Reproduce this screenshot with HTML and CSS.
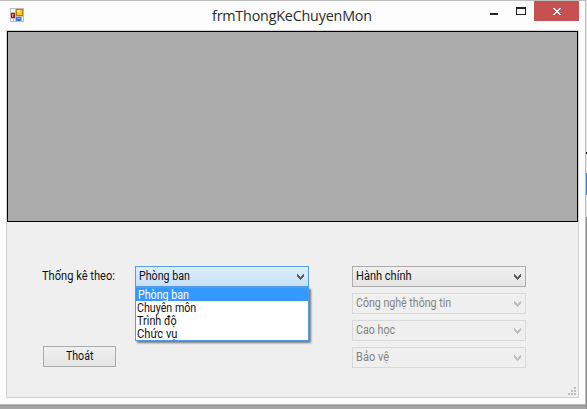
FILE: index.html
```html
<!DOCTYPE html>
<html lang="vi">
<head>
<meta charset="utf-8">
<title>frmThongKeChuyenMon</title>
<link rel="stylesheet" href="styles.css">
</head>
<body>
<svg width="0" height="0" class="defs" aria-hidden="true">
  <symbol id="chevron" viewBox="0 0 7 6"><path d="M0 0h1v1h1v1h1v1h1v-1h1v-1h1v-1h1v3h-1v1h-1v1h-1v1h-1v-1h-1v-1h-1v-1h-1z" fill="currentColor"/></symbol>
</svg>
<div class="desktop">
  <main class="window">
    <header class="titlebar">
      <svg class="app-icon" width="14" height="14" viewBox="0 0 14 14" shape-rendering="crispEdges">
        <path fill="#bdbdbd" d="M0 0h14v14H0z"/>
        <path fill="#fff" d="M1 1h4v3H1zM1 11h2v2H1zM4 11h1v2H4zM12 9h1v4h-1z"/>
        <path fill="#a71b16" d="M1 5h4v5H1z"/><path fill="#e8877d" d="M2 6h2v3H2z"/><path fill="#c52d25" d="M3 7h1v2H3z"/>
        <path fill="#b77b08" d="M6 1h7v7H6z"/><path fill="#ffc928" d="M7 2h5v5H7z"/><path fill="#ffe999" d="M7 2h3v2H7z"/>
        <path fill="#3b78d8" d="M6 9h5v4H6z"/><path fill="#79aef4" d="M7 10h3v1H7z"/>
      </svg>
      <h1 class="title">frmThongKeChuyenMon</h1>
      <div class="controls">
        <svg width="44" height="20" viewBox="0 0 44 20" shape-rendering="crispEdges"><path fill="#222" d="M0 12h8v2H0zM26 6h10v8H26zM27 8v5h8V8z" fill-rule="evenodd"/></svg>
        <svg class="close" width="45" height="20" viewBox="0 0 45 20" shape-rendering="crispEdges"><path fill="#fff" d="M19 7h2v1h1v1h2v-1h1v-1h2v1h-1v1h-1v1h-1v1h1v1h1v1h1v1h-2v-1h-1v-1h-2v1h-1v1h-2v-1h1v-1h1v-1h1v-1h-1v-1h-1v-1h-1z"/></svg>
      </div>
    </header>
    <section class="client">
      <div class="grid"></div>
      <div class="form">
        <div class="left">
          <label class="label"><span class="t-label">Thống kê theo:</span></label>
          <button class="button"><span class="t-exit">Thoát</span></button>
        </div>
        <div class="picker">
          <div class="combo active"><span class="t-dept">Phòng ban</span><svg width="7" height="6"><use href="#chevron"/></svg></div>
          <ul class="menu">
            <li class="selected"><span class="t-dept">Phòng ban</span></li>
            <li><span class="t-major">Chuyên môn</span></li>
            <li><span class="t-level">Trình độ</span></li>
            <li><span class="t-role">Chức vụ</span></li>
          </ul>
        </div>
        <div class="options">
          <div class="combo"><span class="t-admin">Hành chính</span><svg width="7" height="6"><use href="#chevron"/></svg></div>
          <div class="combo disabled"><span class="t-it">Công nghệ thông tin</span><svg width="7" height="6"><use href="#chevron"/></svg></div>
          <div class="combo disabled"><span class="t-grad">Cao học</span><svg width="7" height="6"><use href="#chevron"/></svg></div>
          <div class="combo disabled"><span class="t-guard">Bảo vệ</span><svg width="7" height="6"><use href="#chevron"/></svg></div>
        </div>
      </div>
      <svg class="grip" width="8" height="8" shape-rendering="crispEdges"><path fill="#bdbdbd" d="M6 0h2v2H6zM3 3h2v2H3zM6 3h2v2H6zM0 6h2v2H0zM3 6h2v2H3zM6 6h2v2H6z"/></svg>
    </section>
  </main>
  <aside class="behind"></aside>
</div>
</body>
</html>
```
FILE: styles.css
```css
* { box-sizing: border-box; }
body { margin: 0; background: #a5a5a5; font: 12px/13px Roboto, "Liberation Sans", sans-serif; color: #111; overflow: hidden; }
.defs { position: absolute; }
.desktop { display: flex; width: 587px; height: 409px; }
.window { width: 586px; height: 405px; background: #fcfcfc; border: solid #bdbdbd; border-width: 1px 1px 1px 0; box-shadow: 0 1px 1px #969696; }
.titlebar { height: 29px; display: grid; grid-template-columns: 212px 278px 88px; }
.app-icon { margin: 7px 0 0 10px; }
.title { margin: 4px 0 0; font: 400 15px/20px "Open Sans", sans-serif; color: #2b2b2b; white-space: nowrap; letter-spacing: -.2px; transform: scaleX(.955); transform-origin: left; }
.controls { display: flex; }
.controls svg { flex: none; }
.close { background: #c75050; }
.client { position: relative; margin-left: 6px; width: 573px; height: 368px; border: 1px solid #d2d2d2; background: #efefef; }
.grid { width: 571px; height: 191px; border: 1px solid #000; background: #ababab; }
.form { display: grid; grid-template-columns: 92px 174px 174px; padding: 44px 0 0 36px; }
.label { display: block; height: 80px; padding-top: 4px; margin-left: -1px; }
.button { width: 73px; height: 21px; border: 1px solid #acacac; background: linear-gradient(#f0f0f0,#e5e5e5); font: inherit; color: #111; padding: 0 0 0 22px; display: block; text-align: left; }
.picker { position: relative; }
.options { display: grid; gap: 6px; margin-left: 43px; width: 174px; }
.combo { height: 21px; width: 174px; border: 1px solid #acacac; background: linear-gradient(#f0f0f0,#e5e5e5); display: flex; align-items: center; justify-content: space-between; padding: 0 4px 0 3px; color: #111; }
.combo svg { color: #606060; }
.active { border-color: #569de5; background: linear-gradient(#dfeefb,#c5e0f8); }
.disabled { border-color: #d9d9d9; background: #efefef; color: #838383; }
.disabled svg { color: #bfbfbf; }
.menu { position: absolute; top: 21px; left: 0; width: 174px; height: 54px; margin: 0; padding: 0; list-style: none; background: #fff; border: 1px solid #569de5; box-shadow: 2px 2px 2px #777; }
.menu li { height: 13px; line-height: 15px; padding-left: 1px; }
.menu .selected { background: #3399ff; color: #fff; padding-left: 2px; }
.form span { display: inline-block; white-space: nowrap; transform-origin: left; }
.label span { margin-top: 0; }
.t-label { transform: scaleX(.925); }
.t-exit { transform: scaleX(.88); }
.t-dept { transform: scaleX(.89); }
.t-major { transform: scaleX(.89); }
.t-level { transform: scaleX(.9); }
.t-role { transform: scaleX(.93); }
.t-admin { transform: scaleX(.92); }
.t-it { transform: scaleX(.885); }
.t-grad { transform: scaleX(.89); }
.t-guard { transform: scaleX(.92); }
.grip { position: absolute; right: 2px; bottom: 2px; }
.behind { width: 1px; height: 409px; background: linear-gradient(#e7e7e7 0 152px,#111 152px 154px,#e7e7e7 154px 173px,#3584d5 173px 195px,#e7e7e7 195px 217px,#8b8b8b 217px); }
```
